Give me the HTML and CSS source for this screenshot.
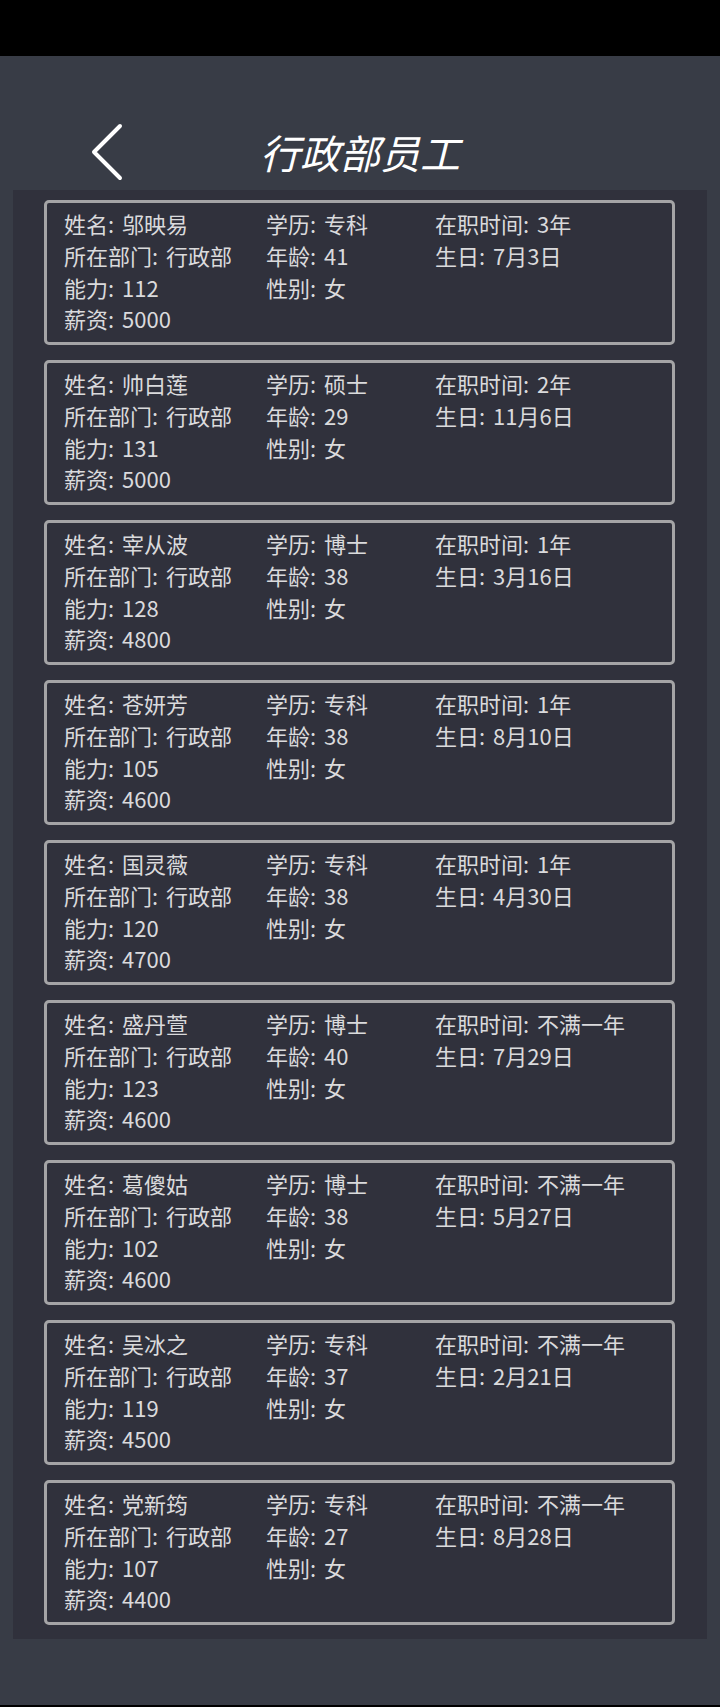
FILE: index.html
```html
<!DOCTYPE html>
<html lang="zh-CN">
<head>
  <meta charset="UTF-8" />
  <meta name="viewport" content="width=device-width, initial-scale=1.0" />
  <title>行政部员工</title>
  <link rel="stylesheet" href="styles.css">
</head>
<body>
  <!-- Barra de estado -->
  <div class="status-bar"></div>

  <!-- Cabecera -->
  <header class="header">
    <div class="back">
      <svg width="40" height="60" viewBox="0 0 40 60">
        <path d="M32 4 L6 30 L32 56" fill="none" stroke="#ffffff" stroke-width="4" stroke-linecap="round" stroke-linejoin="round" />
      </svg>
    </div>
    <h1 class="title">行政部员工</h1>
    <div></div>
  </header>

  <!-- Lista de empleados -->
  <main class="list">
    <div class="card">
      <span>姓名: 邬映易</span><span>学历: 专科</span><span>在职时间: 3年</span>
      <span>所在部门: 行政部</span><span>年龄: 41</span><span>生日: 7月3日</span>
      <span>能力: 112</span><span>性别: 女</span><span></span>
      <span>薪资: 5000</span>
    </div>
    <div class="card">
      <span>姓名: 帅白莲</span><span>学历: 硕士</span><span>在职时间: 2年</span>
      <span>所在部门: 行政部</span><span>年龄: 29</span><span>生日: 11月6日</span>
      <span>能力: 131</span><span>性别: 女</span><span></span>
      <span>薪资: 5000</span>
    </div>
    <div class="card">
      <span>姓名: 宰从波</span><span>学历: 博士</span><span>在职时间: 1年</span>
      <span>所在部门: 行政部</span><span>年龄: 38</span><span>生日: 3月16日</span>
      <span>能力: 128</span><span>性别: 女</span><span></span>
      <span>薪资: 4800</span>
    </div>
    <div class="card">
      <span>姓名: 苍妍芳</span><span>学历: 专科</span><span>在职时间: 1年</span>
      <span>所在部门: 行政部</span><span>年龄: 38</span><span>生日: 8月10日</span>
      <span>能力: 105</span><span>性别: 女</span><span></span>
      <span>薪资: 4600</span>
    </div>
    <div class="card">
      <span>姓名: 国灵薇</span><span>学历: 专科</span><span>在职时间: 1年</span>
      <span>所在部门: 行政部</span><span>年龄: 38</span><span>生日: 4月30日</span>
      <span>能力: 120</span><span>性别: 女</span><span></span>
      <span>薪资: 4700</span>
    </div>
    <div class="card">
      <span>姓名: 盛丹萱</span><span>学历: 博士</span><span>在职时间: 不满一年</span>
      <span>所在部门: 行政部</span><span>年龄: 40</span><span>生日: 7月29日</span>
      <span>能力: 123</span><span>性别: 女</span><span></span>
      <span>薪资: 4600</span>
    </div>
    <div class="card">
      <span>姓名: 葛傻姑</span><span>学历: 博士</span><span>在职时间: 不满一年</span>
      <span>所在部门: 行政部</span><span>年龄: 38</span><span>生日: 5月27日</span>
      <span>能力: 102</span><span>性别: 女</span><span></span>
      <span>薪资: 4600</span>
    </div>
    <div class="card">
      <span>姓名: 吴冰之</span><span>学历: 专科</span><span>在职时间: 不满一年</span>
      <span>所在部门: 行政部</span><span>年龄: 37</span><span>生日: 2月21日</span>
      <span>能力: 119</span><span>性别: 女</span><span></span>
      <span>薪资: 4500</span>
    </div>
    <div class="card">
      <span>姓名: 党新筠</span><span>学历: 专科</span><span>在职时间: 不满一年</span>
      <span>所在部门: 行政部</span><span>年龄: 27</span><span>生日: 8月28日</span>
      <span>能力: 107</span><span>性别: 女</span><span></span>
      <span>薪资: 4400</span>
    </div>
  </main>

  <div class="spacer"></div>
  <div class="nav-bar"></div>
</body>
</html>
```

FILE: styles.css
```css
/* ===== Estilos generales ===== */
body {
  margin: 0;
  width: 720px;
  height: 1707px;
  background: #383c46;
  display: flex;
  flex-direction: column;
  font-family: "Noto Sans CJK SC", "Noto Sans", sans-serif;
  overflow: hidden;
}
.status-bar {
  height: 56px;
  background: #000;
  flex-shrink: 0;
}
/* ===== Cabecera ===== */
.header {
  height: 134px;
  box-sizing: border-box;
  padding-top: 58px;
  display: grid;
  grid-template-columns: 1fr auto 1fr;
  align-items: center;
  flex-shrink: 0;
}
.back {
  padding-left: 88px;
  display: flex;
}
.title {
  margin: 0;
  font-size: 40px;
  line-height: 1;
  font-weight: 400;
  font-style: italic;
  color: #ffffff;
}
/* ===== Lista ===== */
.list {
  margin: 0 13px;
  padding: 10px 32px 14px 31px;
  background: #30313c;
  display: flex;
  flex-direction: column;
  gap: 15px;
}
.card {
  border: 3px solid #a4a4a6;
  border-radius: 5px;
  padding: 5px 10px 7px 17px;
  display: grid;
  grid-template-columns: 202px 169px 1fr;
  font-size: 22px;
  line-height: 31.75px;
  word-spacing: 3px;
  color: #dadadc;
  white-space: nowrap;
}
.spacer {
  flex: 1;
}
.nav-bar {
  height: 2px;
  background: #000;
  flex-shrink: 0;
}
```
